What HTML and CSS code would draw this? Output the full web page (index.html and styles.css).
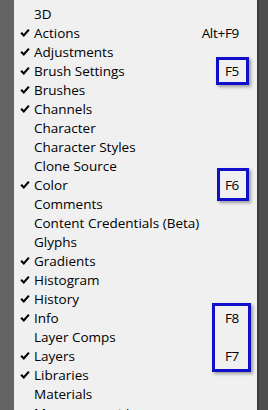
FILE: index.html
```html
<!DOCTYPE html>
<html lang="en">
<head>
    <meta charset="UTF-8">
    <meta name="viewport" content="width=device-width, initial-scale=1.0">
    <title>Window Menu</title>
    <link rel="stylesheet" href="styles.css">
</head>
<body>

    <div class="frame">
        <div class="edge-left"></div>

        <ul class="menu">
            <li class="item"><span class="check"></span><span class="label">3D</span></li>
            <li class="item checked"><span class="check"><svg viewBox="0 0 9 8"><path d="M1 4.2 L3.4 6.6 L8 1.4"/></svg></span><span class="label">Actions</span><span class="key">Alt+F9</span></li>
            <li class="item checked"><span class="check"><svg viewBox="0 0 9 8"><path d="M1 4.2 L3.4 6.6 L8 1.4"/></svg></span><span class="label">Adjustments</span></li>
            <li class="item checked"><span class="check"><svg viewBox="0 0 9 8"><path d="M1 4.2 L3.4 6.6 L8 1.4"/></svg></span><span class="label">Brush Settings</span><span class="key">F5</span></li>
            <li class="item checked"><span class="check"><svg viewBox="0 0 9 8"><path d="M1 4.2 L3.4 6.6 L8 1.4"/></svg></span><span class="label">Brushes</span></li>
            <li class="item checked"><span class="check"><svg viewBox="0 0 9 8"><path d="M1 4.2 L3.4 6.6 L8 1.4"/></svg></span><span class="label">Channels</span></li>
            <li class="item"><span class="check"></span><span class="label">Character</span></li>
            <li class="item"><span class="check"></span><span class="label">Character Styles</span></li>
            <li class="item"><span class="check"></span><span class="label">Clone Source</span></li>
            <li class="item checked"><span class="check"><svg viewBox="0 0 9 8"><path d="M1 4.2 L3.4 6.6 L8 1.4"/></svg></span><span class="label">Color</span><span class="key">F6</span></li>
            <li class="item"><span class="check"></span><span class="label">Comments</span></li>
            <li class="item"><span class="check"></span><span class="label">Content Credentials (Beta)</span></li>
            <li class="item"><span class="check"></span><span class="label">Glyphs</span></li>
            <li class="item checked"><span class="check"><svg viewBox="0 0 9 8"><path d="M1 4.2 L3.4 6.6 L8 1.4"/></svg></span><span class="label">Gradients</span></li>
            <li class="item checked"><span class="check"><svg viewBox="0 0 9 8"><path d="M1 4.2 L3.4 6.6 L8 1.4"/></svg></span><span class="label">Histogram</span></li>
            <li class="item checked"><span class="check"><svg viewBox="0 0 9 8"><path d="M1 4.2 L3.4 6.6 L8 1.4"/></svg></span><span class="label">History</span></li>
            <li class="item checked"><span class="check"><svg viewBox="0 0 9 8"><path d="M1 4.2 L3.4 6.6 L8 1.4"/></svg></span><span class="label">Info</span><span class="key">F8</span></li>
            <li class="item"><span class="check"></span><span class="label">Layer Comps</span></li>
            <li class="item checked"><span class="check"><svg viewBox="0 0 9 8"><path d="M1 4.2 L3.4 6.6 L8 1.4"/></svg></span><span class="label">Layers</span><span class="key">F7</span></li>
            <li class="item checked"><span class="check"><svg viewBox="0 0 9 8"><path d="M1 4.2 L3.4 6.6 L8 1.4"/></svg></span><span class="label">Libraries</span></li>
            <li class="item"><span class="check"></span><span class="label">Materials</span></li>
            <li class="item"><span class="check"></span><span class="label">Measurement Log</span></li>
        </ul>

        <div class="edge-right"></div>

        <!-- highlight boxes drawn over the shortcuts -->
        <div class="mark mark-f5"></div>
        <div class="mark mark-f6"></div>
        <div class="mark mark-f8"></div>
    </div>

</body>
</html>
```

FILE: styles.css
```css
body {
    margin: 0;
    font-family: "Open Sans", "Noto Sans", sans-serif;
    font-size: 13.5px;
    color: #000;
    background-color: #5e5e5e;
    overflow: hidden;
}

.frame {
    position: relative;
    display: flex;
    height: 410px;
    overflow: hidden;
}

.edge-left {
    width: 14px;
    background-color: #646464;
}

.edge-right {
    width: 11px;
    background-color: #4e4e4e;
    border-left: 2px solid #3c3c3c;
    box-sizing: border-box;
}

.menu {
    flex: 1;
    margin: 0;
    padding: 4px 0 0 0;
    list-style: none;
    background-color: #f0f0f0;
}

.item {
    display: flex;
    align-items: center;
    height: 19px;
    padding-right: 18px;
    white-space: nowrap;
}

.check {
    width: 20px;
    display: flex;
    justify-content: center;
    padding-left: 1px;
    box-sizing: border-box;
}

.check svg {
    width: 10px;
    height: 9px;
    fill: none;
    stroke: #000;
    stroke-width: 1.9;
}

.label {
    flex: 1;
}

.key {
    letter-spacing: -0.3px;
}

.mark {
    position: absolute;
    border: 3px solid #1010c8;
    box-sizing: border-box;
    box-shadow: 2px 2px 3px rgba(0, 0, 0, 0.35);
}

.mark-f5 {
    left: 216px;
    top: 57px;
    width: 33px;
    height: 28px;
}

.mark-f6 {
    left: 217px;
    top: 168px;
    width: 32px;
    height: 33px;
}

.mark-f8 {
    left: 212px;
    top: 303px;
    width: 39px;
    height: 69px;
}
```
